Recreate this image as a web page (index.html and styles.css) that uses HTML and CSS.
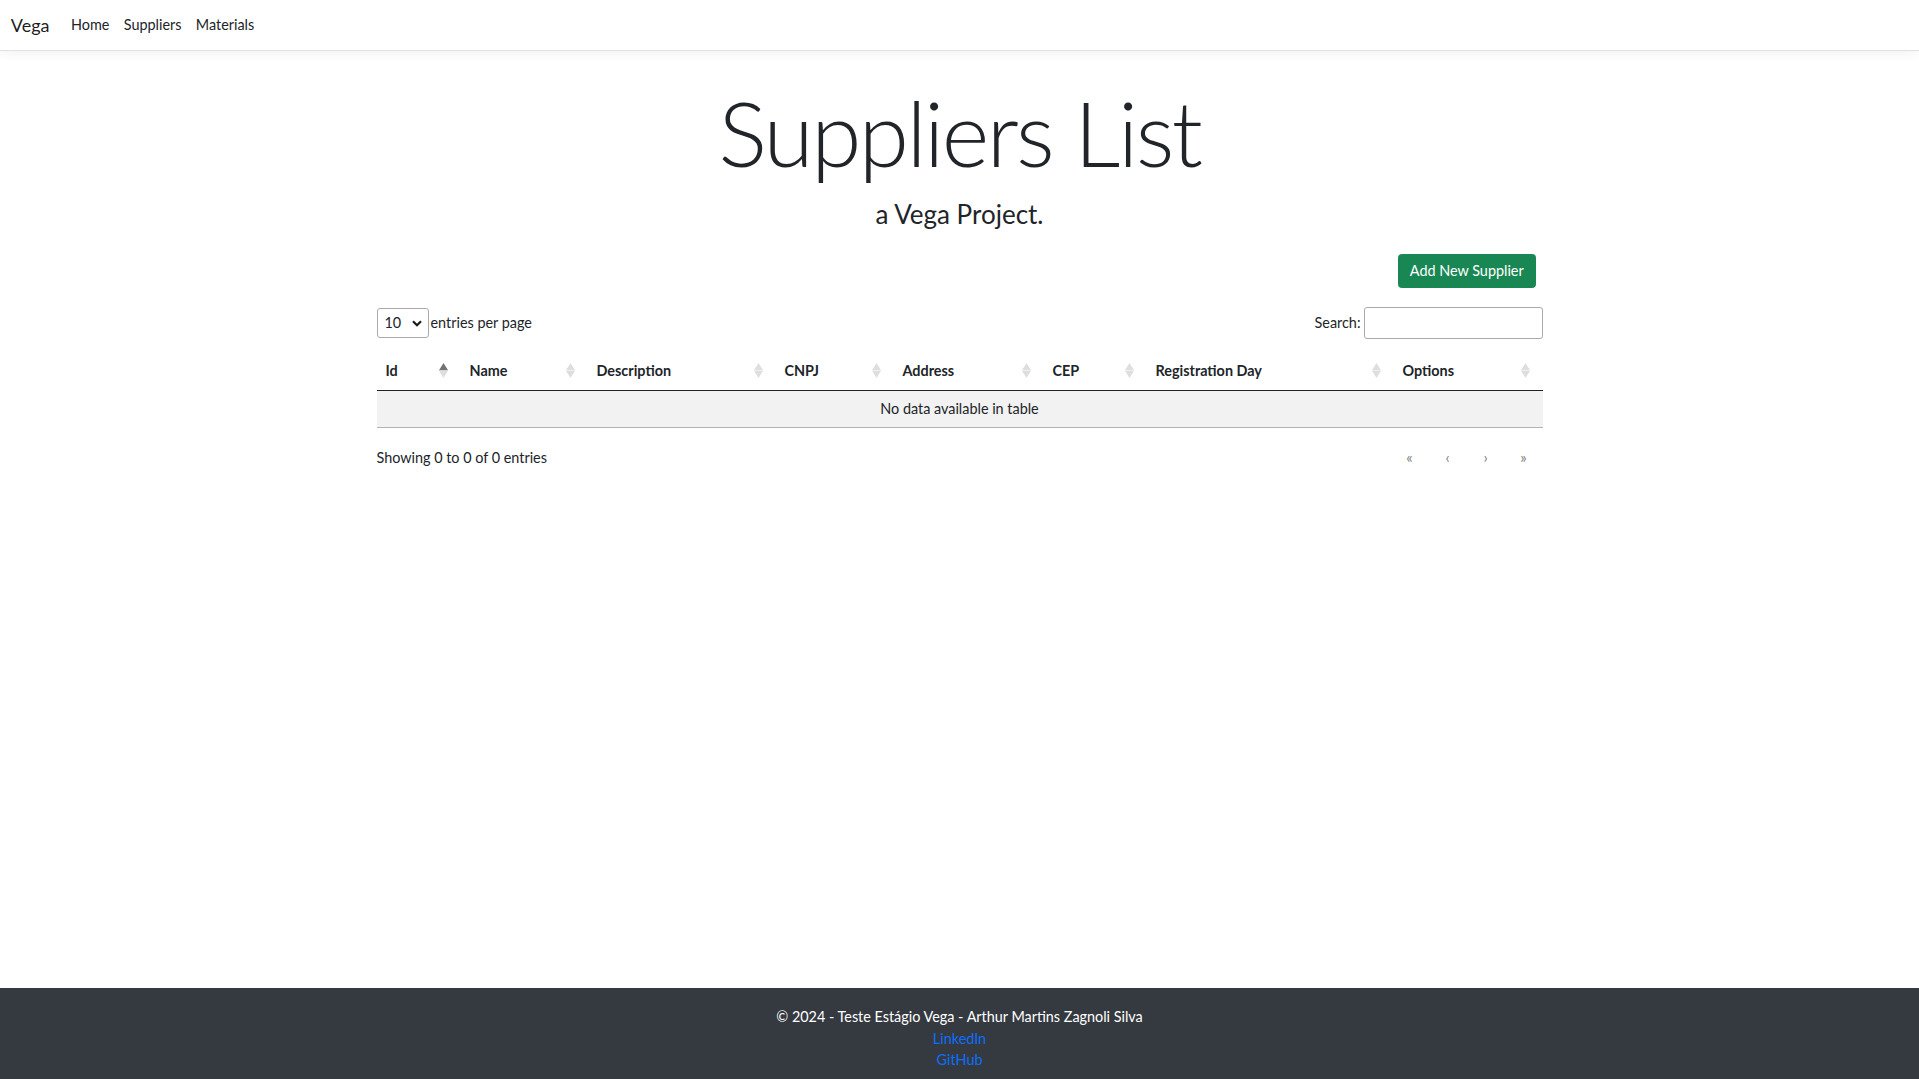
FILE: index.html
```html
<!DOCTYPE html>
<html lang="en">
<head>
<meta charset="utf-8">
<title>Suppliers List - Vega</title>
<link rel="stylesheet" href="styles.css">
</head>
<body>
<header class="site-header">
  <nav class="navbar">
    <a class="navbar-brand" href="#">Vega</a>
    <ul class="nav-list">
      <li><a class="nav-link" href="#">Home</a></li>
      <li><a class="nav-link" href="#">Suppliers</a></li>
      <li><a class="nav-link" href="#">Materials</a></li>
    </ul>
  </nav>
</header>
<div class="container">
  <main class="main">
    <div class="hero">
      <h1 class="display-title">Suppliers List</h1>
      <p class="subtitle">a Vega Project.</p>
    </div>
    <div class="actions">
      <a class="btn-success" href="#">Add New Supplier</a>
    </div>
    <div class="dt-container">
      <div class="dt-row dt-top">
        <div class="dt-length">
          <div class="dt-select"><span>10</span><svg class="chev" width="10" height="7" viewBox="0 0 10 7"><polyline points="1,1.2 5,5.2 9,1.2" fill="none" stroke="#1a1a1a" stroke-width="2.2"/></svg></div>
          <label class="dt-label">entries per page</label>
        </div>
        <div class="dt-search">
          <label class="dt-label">Search:</label>
          <input class="dt-input" type="search">
        </div>
      </div>
      <table class="dt-table">
        <colgroup>
          <col class="w-id"><col class="w-name"><col class="w-desc"><col class="w-cnpj"><col class="w-addr"><col class="w-cep"><col class="w-reg"><col class="w-opt">
        </colgroup>
        <thead>
          <tr>
            <th><div class="th-inner"><span>Id</span><svg class="ord" width="9" height="15" viewBox="0 0 9 15"><path class="ord-up active" d="M4.5 0L9 7.3H0Z"/><path class="ord-down" d="M0 7.7H9L4.5 15Z"/></svg></div></th>
            <th><div class="th-inner"><span>Name</span><svg class="ord" width="9" height="15" viewBox="0 0 9 15"><path class="ord-up" d="M4.5 0L9 7.3H0Z"/><path class="ord-down" d="M0 7.7H9L4.5 15Z"/></svg></div></th>
            <th><div class="th-inner"><span>Description</span><svg class="ord" width="9" height="15" viewBox="0 0 9 15"><path class="ord-up" d="M4.5 0L9 7.3H0Z"/><path class="ord-down" d="M0 7.7H9L4.5 15Z"/></svg></div></th>
            <th><div class="th-inner"><span>CNPJ</span><svg class="ord" width="9" height="15" viewBox="0 0 9 15"><path class="ord-up" d="M4.5 0L9 7.3H0Z"/><path class="ord-down" d="M0 7.7H9L4.5 15Z"/></svg></div></th>
            <th><div class="th-inner"><span>Address</span><svg class="ord" width="9" height="15" viewBox="0 0 9 15"><path class="ord-up" d="M4.5 0L9 7.3H0Z"/><path class="ord-down" d="M0 7.7H9L4.5 15Z"/></svg></div></th>
            <th><div class="th-inner"><span>CEP</span><svg class="ord" width="9" height="15" viewBox="0 0 9 15"><path class="ord-up" d="M4.5 0L9 7.3H0Z"/><path class="ord-down" d="M0 7.7H9L4.5 15Z"/></svg></div></th>
            <th><div class="th-inner"><span>Registration Day</span><svg class="ord" width="9" height="15" viewBox="0 0 9 15"><path class="ord-up" d="M4.5 0L9 7.3H0Z"/><path class="ord-down" d="M0 7.7H9L4.5 15Z"/></svg></div></th>
            <th><div class="th-inner"><span>Options</span><svg class="ord" width="9" height="15" viewBox="0 0 9 15"><path class="ord-up" d="M4.5 0L9 7.3H0Z"/><path class="ord-down" d="M0 7.7H9L4.5 15Z"/></svg></div></th>
          </tr>
        </thead>
        <tbody>
          <tr><td colspan="8" class="dt-empty">No data available in table</td></tr>
        </tbody>
      </table>
      <div class="dt-row dt-bottom">
        <div class="dt-info">Showing 0 to 0 of 0 entries</div>
        <nav class="dt-paging">
          <button class="dt-paging-button" disabled>«</button>
          <button class="dt-paging-button" disabled>‹</button>
          <button class="dt-paging-button" disabled>›</button>
          <button class="dt-paging-button" disabled>»</button>
        </nav>
      </div>
    </div>
  </main>
</div>
<footer class="site-footer">
  <div class="footer-line">© 2024 - Teste Estágio Vega - Arthur Martins Zagnoli Silva</div>
  <div class="footer-line"><a class="footer-link" href="#">LinkedIn</a></div>
  <div class="footer-line"><a class="footer-link" href="#">GitHub</a></div>
</footer>
</body>
</html>
```

FILE: styles.css
```css
* { box-sizing: border-box; }
html, body { margin: 0; padding: 0; }
body {
  font-family: Lato, "Segoe UI", "Open Sans", sans-serif;
  font-size: 14.4px;
  line-height: 1.5;
  color: #212529;
  background: #fff;
  display: flex;
  flex-direction: column;
  min-height: 100vh;
}

/* navbar */
.navbar {
  height: 51px;
  display: flex;
  align-items: center;
  padding: 0 10.8px;
  border-bottom: 1px solid #dee2e6;
  box-shadow: 0 3.6px 10.8px rgba(0, 0, 0, .05);
  margin-bottom: 14.4px;
}
.navbar-brand {
  font-size: 18px;
  line-height: 27px;
  color: rgba(0, 0, 0, .9);
  text-decoration: none;
  margin-right: 14.4px;
}
.nav-list { display: flex; list-style: none; margin: 0; padding: 0; }
.nav-link {
  display: block;
  padding: 7.2px;
  color: #212529;
  text-decoration: none;
  line-height: 21.6px;
}

/* container */
.container {
  width: 100%;
  max-width: 1187.6px;
  margin: 0 auto;
  padding: 0 10.8px;
}
.hero { text-align: center; }
.display-title {
  font-size: 91px;
  font-weight: 300;
  line-height: 1.2;
  margin: 12px 0 0;
  letter-spacing: -2.5px;
}
.subtitle {
  font-size: 26px;
  line-height: 1.2;
  margin: 12.5px 0 0;
}
.actions {
  display: flex;
  justify-content: flex-end;
  margin-top: 23.5px;
  padding-right: 7px;
}
.btn-success {
  display: inline-block;
  background: #198754;
  border: 1px solid #198754;
  color: #fff;
  border-radius: 3.4px;
  padding: 5.4px 10.8px;
  font-size: 14.4px;
  line-height: 21.6px;
  text-decoration: none;
}

/* datatable */
.dt-row { display: flex; justify-content: space-between; align-items: center; }
.dt-top { margin-top: 19px; height: 32px; }
.dt-length { display: flex; align-items: center; }
.dt-select {
  width: 52px;
  height: 30px;
  border: 1px solid #aaa;
  border-radius: 3px;
  display: flex;
  align-items: center;
  justify-content: space-between;
  padding: 0 6px 0 7px;
  margin-right: 2px;
}
.chev { display: block; }
.dt-search { display: flex; align-items: center; }
.dt-label { line-height: 21.6px; }
.dt-input {
  width: 179px;
  height: 32px;
  margin-left: 3px;
  border: 1px solid #aaa;
  border-radius: 3px;
  padding: 5px;
  background: transparent;
  font: inherit;
}

.dt-table {
  width: 100%;
  table-layout: fixed;
  border-collapse: collapse;
  margin-top: 12px;
}
.w-id { width: 84px; }
.w-name { width: 127px; }
.w-desc { width: 188px; }
.w-cnpj { width: 118px; }
.w-addr { width: 150px; }
.w-cep { width: 103px; }
.w-reg { width: 247px; }
.w-opt { width: 149px; }

.dt-table th {
  text-align: left;
  font-weight: 700;
  padding: 8.5px 13px 8.5px 9px;
  border-bottom: 1px solid #222;
}
.th-inner {
  display: flex;
  align-items: center;
  justify-content: space-between;
  line-height: 21.6px;
}
.ord { display: block; }
.ord-up, .ord-down { fill: #000; opacity: .13; }
.ord-up.active { opacity: .55; }

.dt-table td {
  padding: 7.2px 9px;
  line-height: 21.6px;
  border-bottom: 1px solid #b3b3b3;
}
.dt-empty { text-align: center; background: #f2f2f2; }

.dt-bottom { margin-top: 19px; }
.dt-info { line-height: 21.6px; }
.dt-paging { display: flex; }
.dt-paging-button {
  width: 38px;
  padding: 0;
  border: 0;
  background: transparent;
  font: inherit;
  font-size: 15px;
  line-height: 21.6px;
  color: #808080;
  text-align: center;
}

/* footer */
.site-footer {
  margin-top: auto;
  background: #343a40;
  color: #fff;
  text-align: center;
  padding: 18px 0 8px;
  line-height: 21.6px;
}
.footer-link { color: #0d6efd; text-decoration: none; }
```
